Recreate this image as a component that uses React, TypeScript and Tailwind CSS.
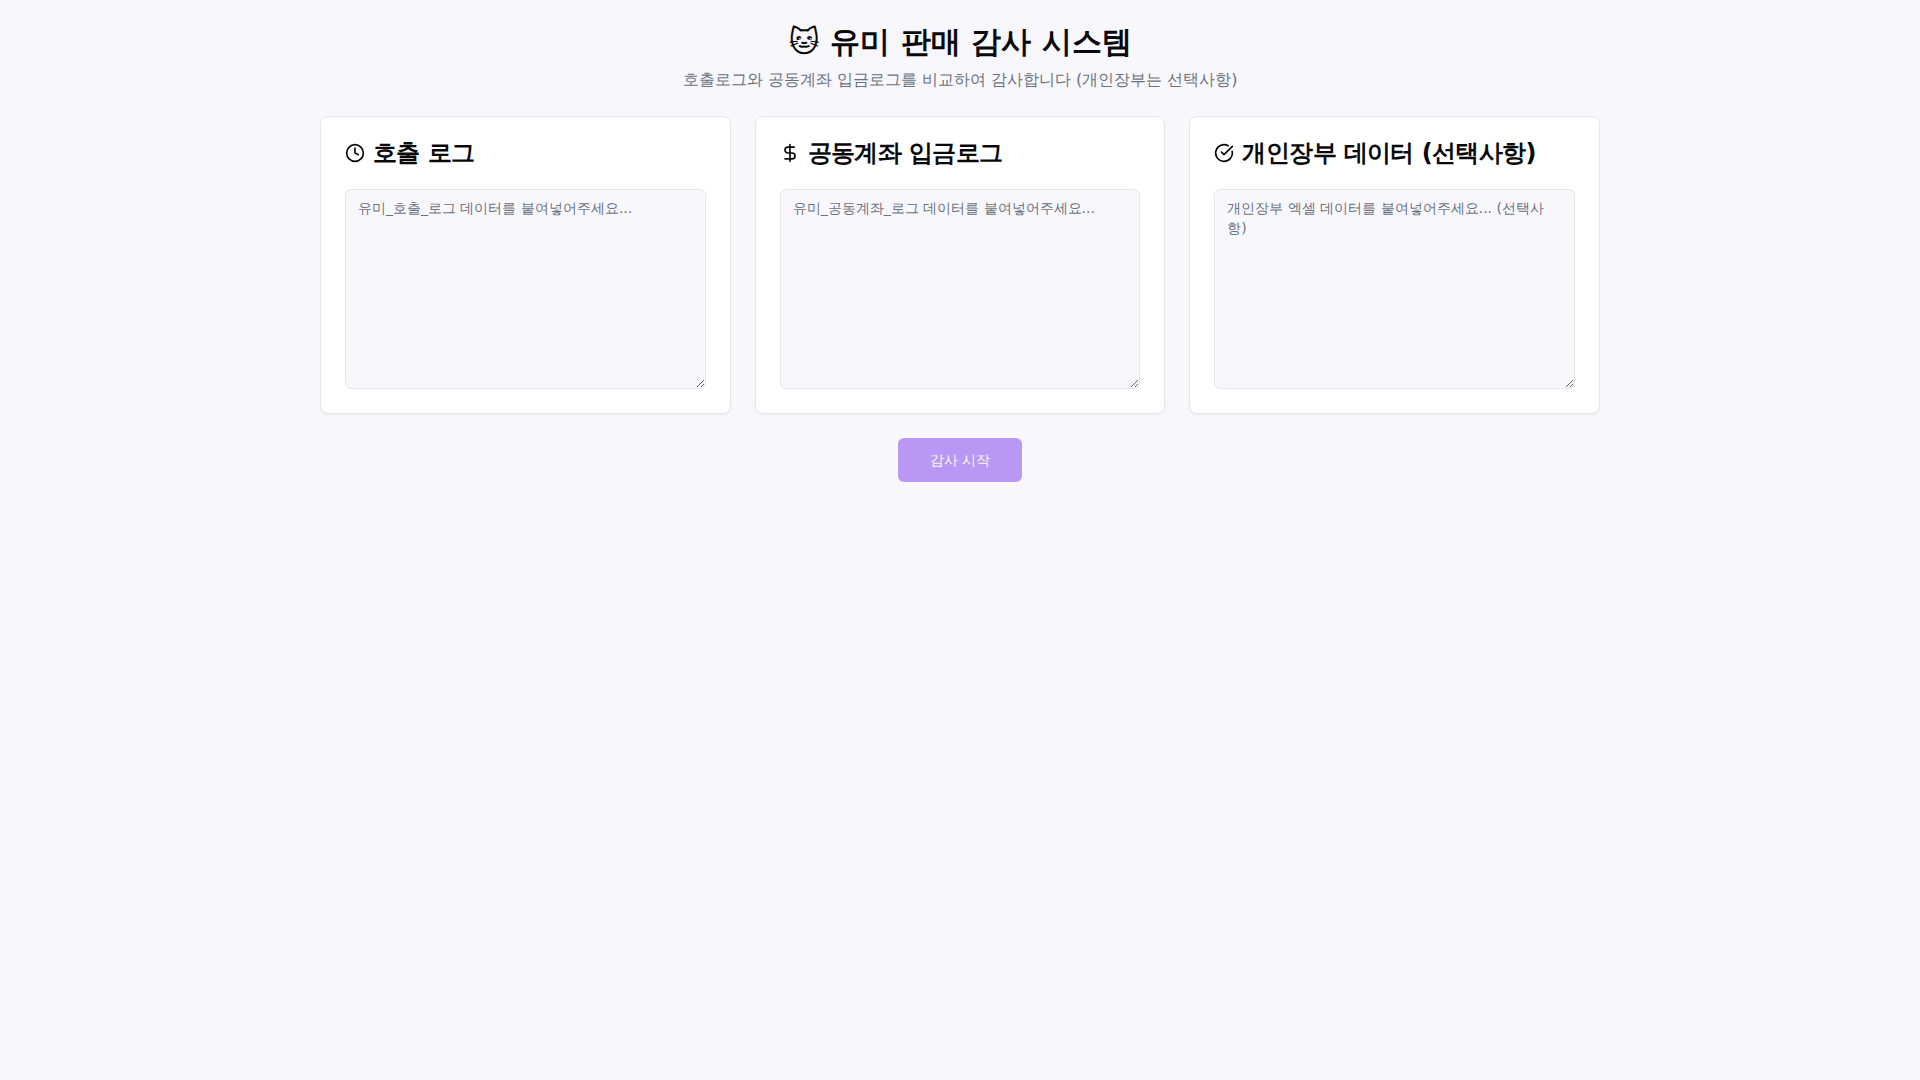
import { useState } from "react";
import { CircleCheckBig, Clock, DollarSign } from "lucide-react";

const logFields = [
  { id: "call-log", title: "호출 로그", icon: Clock, placeholder: "유미_호출_로그 데이터를 붙여넣어주세요..." },
  { id: "deposit-log", title: "공동계좌 입금로그", icon: DollarSign, placeholder: "유미_공동계좌_로그 데이터를 붙여넣어주세요..." },
  { id: "ledger", title: "개인장부 데이터 (선택사항)", icon: CircleCheckBig, placeholder: "개인장부 엑셀 데이터를 붙여넣어주세요... (선택사항)" },
];

export default function App() {
  const [values, setValues] = useState<Record<string, string>>({});
  // The personal ledger is optional, the other two logs are not
  const canStart = Boolean(values["call-log"]?.trim() && values["deposit-log"]?.trim());

  return (
    <div className="min-h-screen bg-[#f8f7fc] p-6 font-['DejaVu_Sans',sans-serif] text-[#09090b]">
      <div className="mx-auto max-w-7xl space-y-6">
        <header className="space-y-2 text-center">
          <h1 className="text-3xl font-bold">🐱 유미 판매 감사 시스템</h1>
          <p className="text-[#6b7280]">호출로그와 공동계좌 입금로그를 비교하여 감사합니다 (개인장부는 선택사항)</p>
        </header>

        <div className="grid grid-cols-1 gap-6 lg:grid-cols-3">
          {logFields.map(({ id, title, icon: Icon, placeholder }) => (
            <section key={id} className="rounded-lg border border-[#e5e7eb] bg-white shadow-xs">
              <div className="p-6">
                <label htmlFor={id} className="flex items-center gap-2 text-2xl leading-none font-semibold tracking-tight">
                  <Icon className="h-5 w-5" />
                  {title}
                </label>
              </div>
              <div className="p-6 pt-0">
                <textarea
                  id={id}
                  placeholder={placeholder}
                  value={values[id] ?? ""}
                  onChange={(e) => setValues({ ...values, [id]: e.target.value })}
                  className="block min-h-[200px] w-full rounded-md border border-[#e5e7eb] bg-[#f8f7fc] px-3 py-2 text-sm placeholder:text-[#6b7280]"
                />
              </div>
            </section>
          ))}
        </div>

        <div className="flex justify-center">
          <button
            disabled={!canStart}
            className="h-11 rounded-md bg-[#7c3aed] px-8 text-sm font-medium text-[#f8f7fc] disabled:opacity-50"
          >
            감사 시작
          </button>
        </div>
      </div>
    </div>
  );
}
